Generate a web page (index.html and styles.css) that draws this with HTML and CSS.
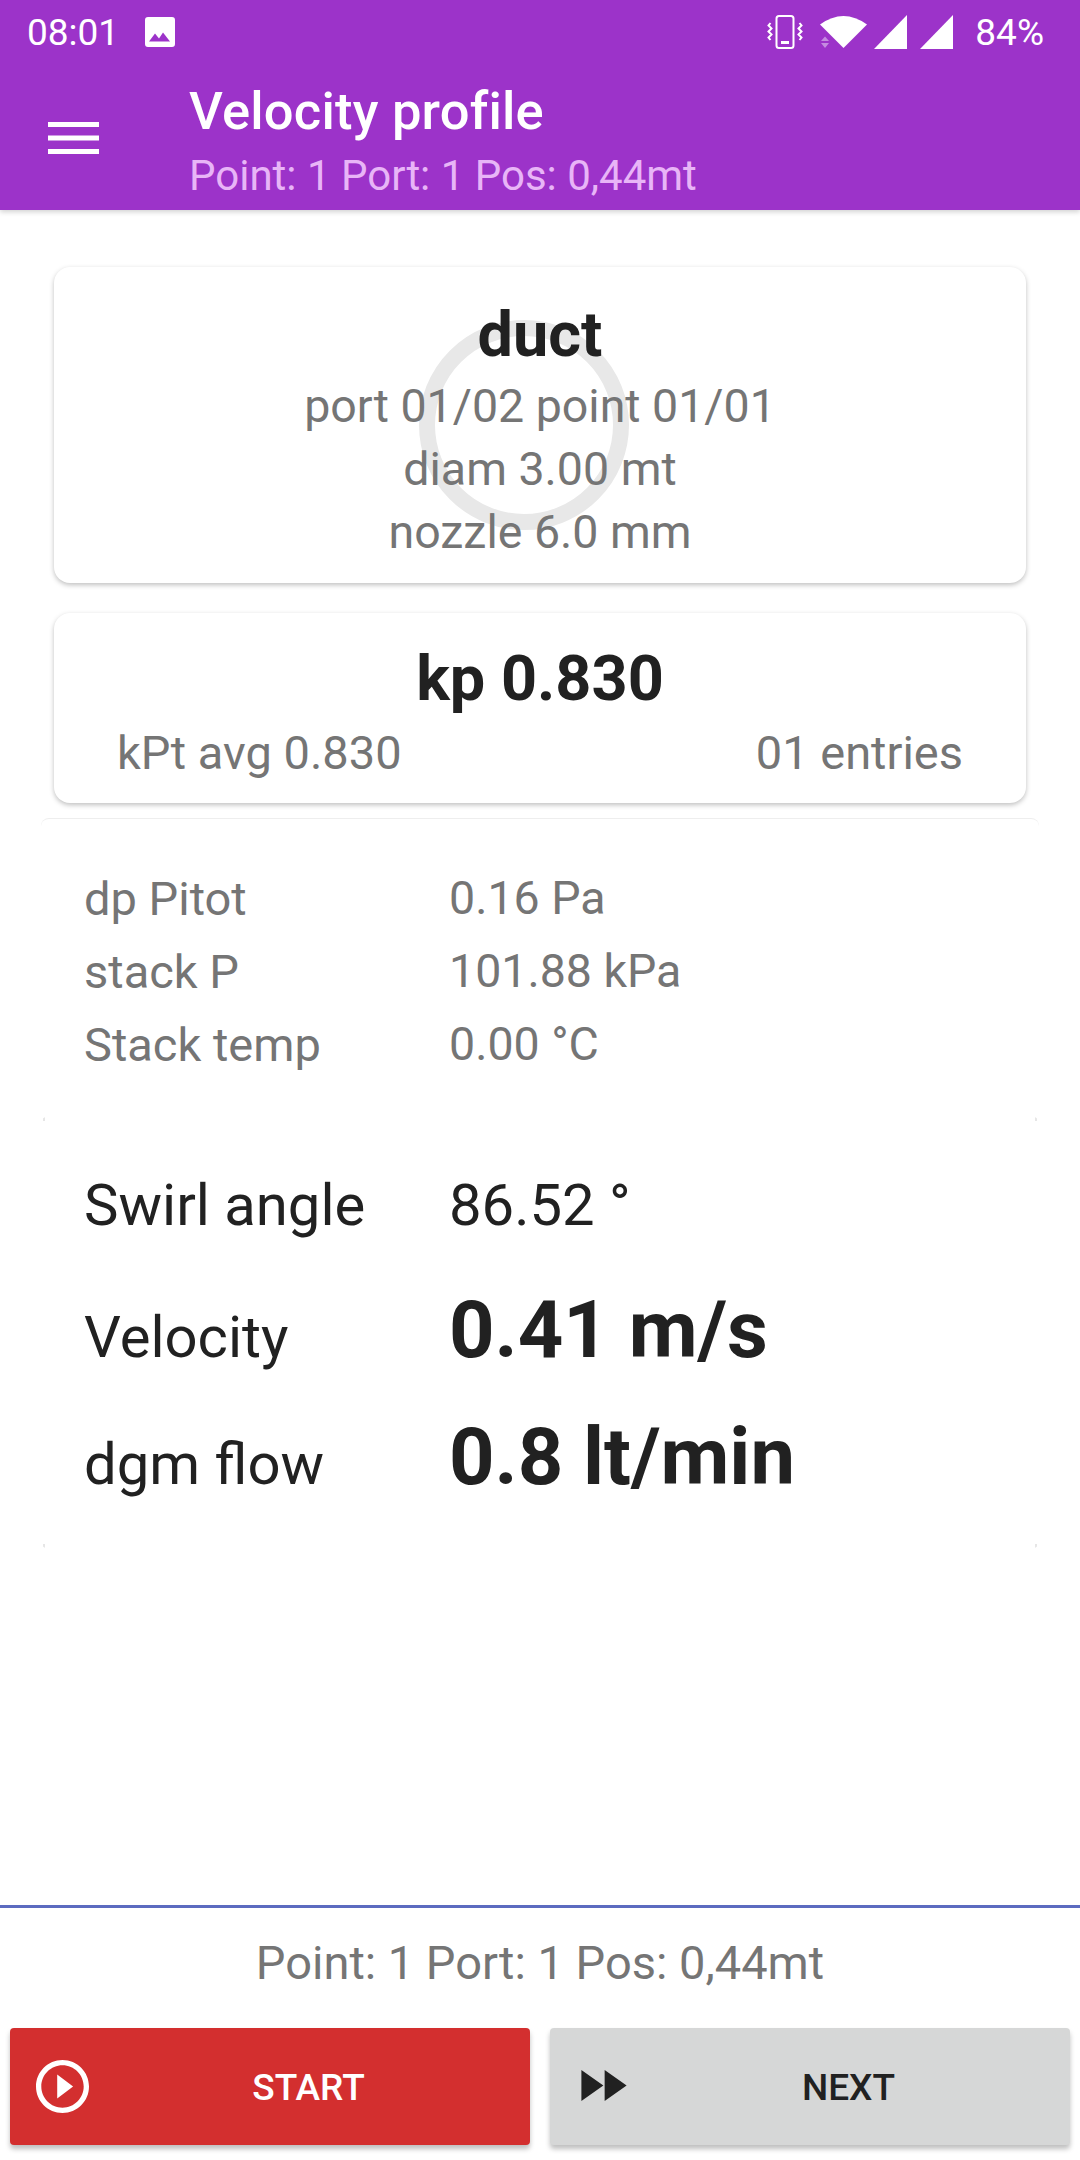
FILE: index.html
```html
<!DOCTYPE html>
<html lang="en">
  <head>
    <meta charset="UTF-8">
    <title>Velocity profile</title>
    <link rel="stylesheet" href="styles.css">
  </head>
  <body>
    <div class="screen">
      <header class="appbar">
        <div class="statusbar">
          <span class="clock">08:01</span>
          <svg class="ic-picture" viewBox="0 0 30 30"><path fill="#fff" fill-rule="evenodd" d="M3 0h24a3 3 0 0 1 3 3v24a3 3 0 0 1-3 3H3a3 3 0 0 1-3-3V3a3 3 0 0 1 3-3zM4 24.500l6-8 4 5 4-6 7 9z"/></svg>
          <span class="status-gap"></span>
          <svg class="ic-vibrate" viewBox="0 0 36 36"><g fill="none" stroke="#fff" stroke-width="2"><rect x="9.500" y="2" width="17" height="32" rx="2.500"/><path d="M3.500 9l-2 2.500 3 3-3 3 3 3-3 3 2 2.500M32.500 9l2 2.500-3 3 3 3-3 3 3 3-2 2.500"/></g><rect x="14" y="27" width="8" height="3" fill="#fff"/></svg>
          <svg class="ic-wifi" viewBox="0 0 47 32"><path fill="#fff" d="M0 8.500Q23.500-8.500 47 8.500L23.500 32z"/><path fill="#c58be0" d="M1 25l4-4.500 4 4.500zM1 27h8l-4 5z"/></svg>
          <svg class="ic-signal" viewBox="0 0 33 34"><path fill="#fff" d="M33 0v34H0z"/></svg>
          <svg class="ic-signal" viewBox="0 0 33 34"><path fill="#fff" d="M33 0v34H0z"/></svg>
          <span class="battery">84%</span>
        </div>
        <div class="toolbar">
          <svg class="ic-menu" viewBox="0 0 51 32"><path fill="#fff" d="M0 0h51v5H0zM0 13.500h51v5H0zM0 27h51v5H0z"/></svg>
          <div class="toolbar-titles">
            <div class="toolbar-title">Velocity profile</div>
            <div class="toolbar-sub">Point: 1 Port: 1 Pos: 0,44mt</div>
          </div>
        </div>
      </header>

      <main class="content">
        <section class="card card-duct">
          <div class="ring"></div>
          <div class="card-title">duct</div>
          <div class="card-line">port 01/02 point 01/01</div>
          <div class="card-line">diam 3.00 mt</div>
          <div class="card-line">nozzle 6.0 mm</div>
        </section>

        <section class="card card-kp">
          <div class="card-title">kp 0.830</div>
          <div class="kp-row">
            <span>kPt avg 0.830</span>
            <span>01 entries</span>
          </div>
        </section>

        <section class="panel panel-raw">
          <div class="raw-row"><span class="label">dp Pitot</span><span>0.16 Pa</span></div>
          <div class="raw-row"><span class="label">stack P</span><span>101.88 kPa</span></div>
          <div class="raw-row"><span class="label">Stack temp</span><span>0.00 °C</span></div>
        </section>

        <section class="panel panel-results">
          <div class="result-row row-swirl"><span class="label">Swirl angle</span><span>86.52 °</span></div>
          <div class="result-row"><span class="label">Velocity</span><span class="big">0.41 m/s</span></div>
          <div class="result-row"><span class="label">dgm flow</span><span class="big">0.8 lt/min</span></div>
        </section>
      </main>

      <footer class="footer">
        <div class="footer-status">Point: 1 Port: 1 Pos: 0,44mt</div>
        <div class="buttons">
          <button class="btn btn-start">
            <svg class="btn-icon" viewBox="2 2 20 20"><path fill="#fff" d="M10 16.500l6-4.500-6-4.500v9zM12 2C6.480 2 2 6.480 2 12s4.480 10 10 10 10-4.480 10-10S17.520 2 12 2zm0 18c-4.410 0-8-3.590-8-8s3.590-8 8-8 8 3.590 8 8-3.590 8-8 8z"/></svg>
            START
          </button>
          <button class="btn btn-next">
            <svg class="btn-icon icon-ff" viewBox="4 6 17.500 12"><path fill="#212121" d="M4 18l8.500-6L4 6v12zm9-12v12l8.500-6L13 6z"/></svg>
            NEXT
          </button>
        </div>
      </footer>
    </div>
  </body>
</html>
```

FILE: styles.css
```css
* {
    box-sizing: border-box;
}
body {
    margin: 0;
    background: white;
    font-family: Roboto, "Liberation Sans", sans-serif;
}
.screen {
    display: flex;
    flex-direction: column;
    width: 1080px;
    height: 2160px;
    overflow: hidden;
}

/* top bar */
.appbar {
    height: 210px;
    background: #9c33c9;
    color: white;
    box-shadow: 0 2px 5px rgba(0, 0, 0, 0.18);
    position: relative;
}
.statusbar {
    display: flex;
    align-items: center;
    height: 66px;
    padding: 0 36px 2px 27px;
}
.clock {
    font-size: 37px;
}
.ic-picture {
    width: 30px;
    height: 30px;
    margin-left: 26px;
}
.status-gap {
    flex: 1;
}
.ic-vibrate {
    width: 36px;
    height: 36px;
}
.ic-wifi {
    width: 47px;
    height: 32px;
    margin-left: 17px;
}
.ic-signal {
    width: 33px;
    height: 34px;
    margin-left: 13px;
}
.ic-wifi + .ic-signal {
    margin-left: 7px;
}
.battery {
    font-size: 37px;
    margin-left: 22px;
}
.toolbar {
    display: flex;
    align-items: center;
    height: 144px;
    padding-left: 48px;
}
.ic-menu {
    width: 51px;
    height: 32px;
    margin-right: 90px;
}
.toolbar-titles {
    padding-top: 14px;
}
.toolbar-title {
    font-size: 52.500px;
    letter-spacing: 0.2px;
    font-weight: 500;
    line-height: 62px;
}
.toolbar-sub {
    font-size: 42px;
    line-height: 68px;
    color: #e8b5f7;
}

/* cards */
.content {
    flex: 1;
    display: flex;
    flex-direction: column;
    padding: 57px 41px 0;
}
.card {
    margin: 0 13px;
    background: white;
    border-radius: 16px;
    box-shadow: 0 2px 5px rgba(0, 0, 0, 0.25);
    text-align: center;
}
.card-duct {
    position: relative;
    height: 316px;
    padding-top: 32px;
}
.card-kp {
    height: 190px;
    margin-top: 30px;
    padding-top: 30px;
}
.card-title {
    position: relative;
    font-size: 63px;
    font-weight: 700;
    line-height: 71px;
    margin-bottom: 5px;
    color: #212121;
}
.card-kp .card-title {
    line-height: 72px;
    margin-bottom: 7px;
}
.card-line {
    position: relative;
    font-size: 46.500px;
    line-height: 63px;
    color: #757575;
}
.ring {
    position: absolute;
    left: 365px;
    top: 53px;
    width: 210px;
    height: 210px;
    border: 16px solid #e8e8e8;
    border-radius: 50%;
}
.kp-row {
    display: flex;
    justify-content: space-between;
    padding: 0 63px;
    font-size: 47px;
    line-height: 62px;
    color: #757575;
}

/* data panels */
.panel {
    border-radius: 8px;
}
.panel-raw {
    height: 298px;
    margin-top: 15px;
    padding: 43px 43px 0;
    border-top: 1px solid #eeeeee;
    color: #757575;
}
.raw-row {
    display: flex;
    font-size: 46.500px;
    line-height: 73px;
}
.label {
    flex: 0 0 365px;
}
.raw-row .label {
    font-size: 47px;
}
.panel-results {
    height: 433px;
    padding: 42px 43px 0;
    color: #212121;
    background:
        linear-gradient(#e6e6e6, #e6e6e6) 2px 0 / 2px 5px no-repeat,
        linear-gradient(#e6e6e6, #e6e6e6) calc(100% - 2px) 0 / 2px 5px no-repeat,
        linear-gradient(#e6e6e6, #e6e6e6) 2px 100% / 2px 5px no-repeat,
        linear-gradient(#e6e6e6, #e6e6e6) calc(100% - 2px) 100% / 2px 5px no-repeat;
}
.result-row {
    display: flex;
    align-items: baseline;
    height: 127px;
    font-size: 58px;
    line-height: 125px;
}
.row-swirl {
    height: 95px;
    line-height: 95px;
    margin-bottom: 14px;
}
.big {
    font-size: 79.500px;
    font-weight: 700;
}

/* bottom */
.footer {
    height: 255px;
    border-top: 3px solid #5c6bc0;
}
.footer-status {
    height: 120px;
    padding-top: 24px;
    font-size: 47px;
    line-height: 62px;
    text-align: center;
    color: #757575;
}
.buttons {
    display: flex;
    gap: 20px;
    padding: 0 10px;
}
.btn {
    flex: 1;
    position: relative;
    height: 117px;
    padding: 2px 0 0 77px;
    border: none;
    border-radius: 4px;
    font-family: inherit;
    font-size: 37px;
    font-weight: 500;
    box-shadow: 0 4px 5px rgba(0, 0, 0, 0.25);
}
.btn-start {
    background: #d32f2f;
    color: white;
}
.btn-next {
    background: #d6d7d7;
    color: #212121;
}
.btn-icon {
    position: absolute;
    left: 26px;
    top: 32px;
    width: 53px;
    height: 53px;
}
.icon-ff {
    left: 31px;
    top: 42px;
    width: 46px;
    height: 31px;
}
```
